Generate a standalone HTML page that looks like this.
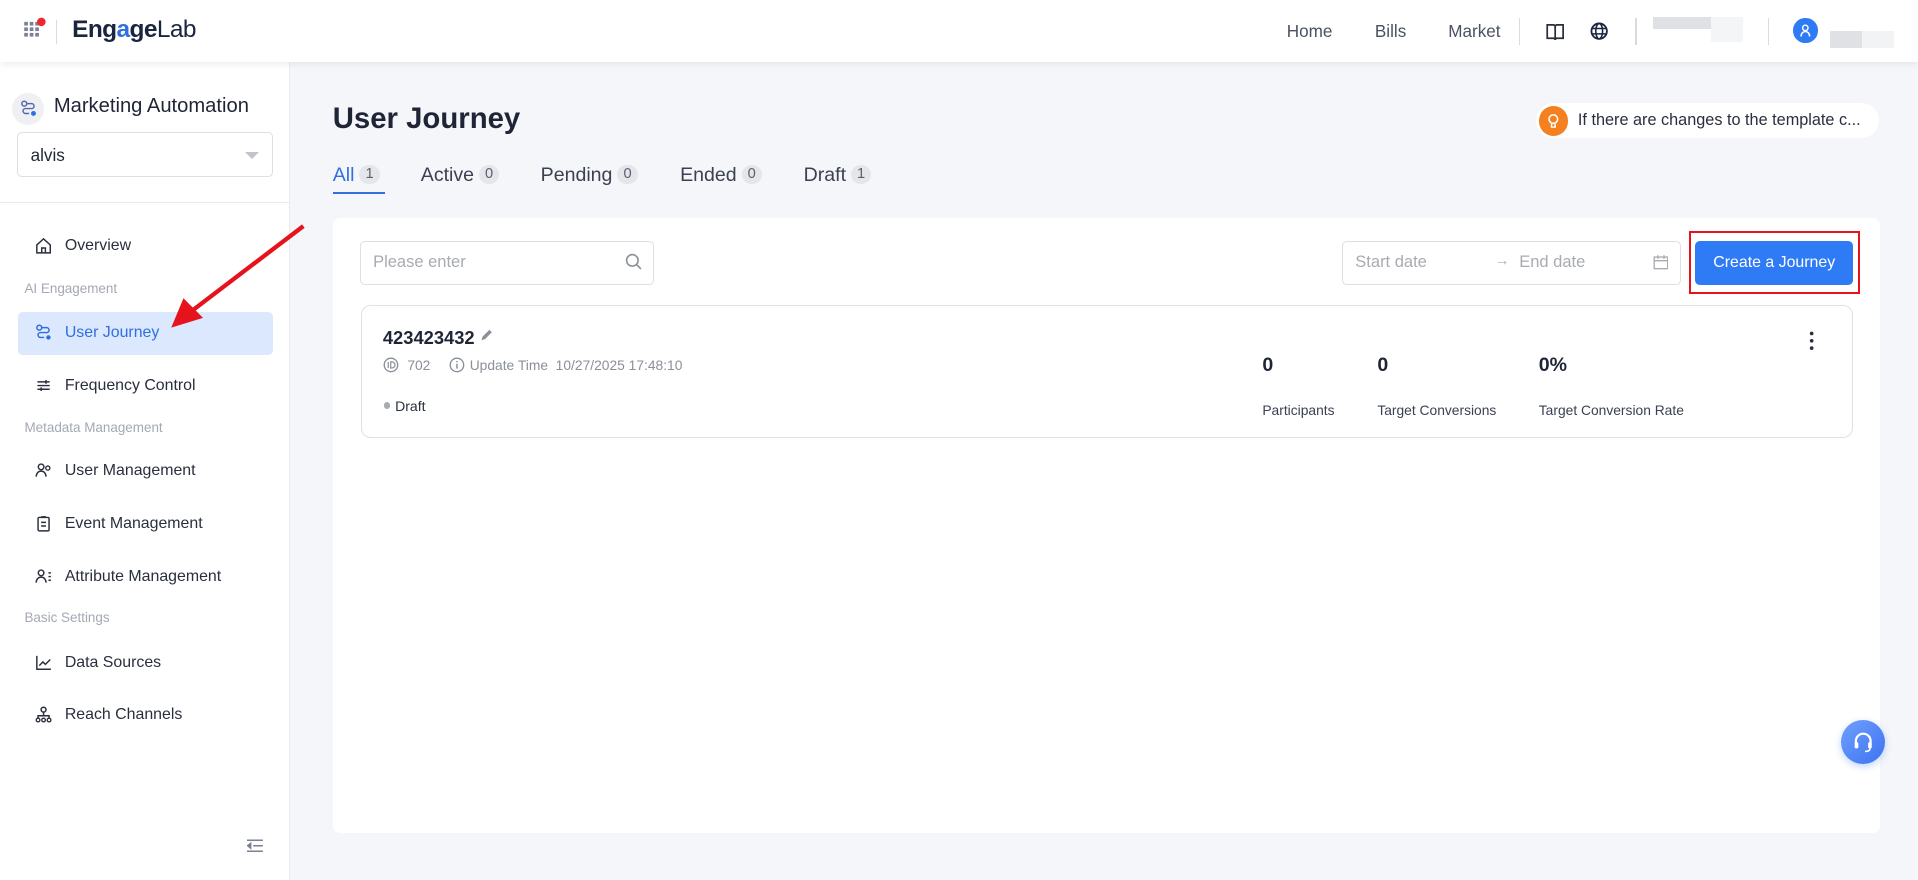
<!DOCTYPE html>
<html><head><meta charset="utf-8"><style>
*{box-sizing:border-box;margin:0;padding:0}
html,body{width:1918px;height:880px;overflow:hidden;background:#f5f6fa}
#z{zoom:1.2232;width:1568px;height:720px;position:relative;font-family:"Liberation Sans",Arial,sans-serif;color:#1f2536}
.a{position:absolute}
.hdr{left:0;top:0;width:1568px;height:51px;background:#fff;box-shadow:0 2px 6px rgba(0,0,0,.08);z-index:3}
.nav{font-size:14px;color:#4a5163;top:18px}
.vd{width:1px;height:22px;background:#d8dbe2;top:15px}
.side{left:0;top:51px;width:237px;height:669px;background:#fff;border-right:1px solid #e8eaef}
.mi{left:53px;font-size:13px;color:#2a2f3d}
.ic{left:29px;width:14px;height:14px}
.grp{left:20px;font-size:11px;color:#a3a8b4}
.tab{top:134px;font-size:16px;color:#3b4152}
.bd{display:inline-block;background:#e4e6ea;color:#5a6070;font-size:12px;border-radius:8px;padding:1px 5px;margin-left:4px;vertical-align:2px}
.lbl{font-size:11.3px;color:#3b4152;top:329px}
.num{font-size:16px;font-weight:bold;top:289px}
</style></head><body><div id="z">
<div class="a hdr">
 <svg class="a" style="left:19px;top:14px" width="20" height="18"><g fill="#7b8190"><rect x="1" y="4" width="3" height="3"/><rect x="5.5" y="4" width="3" height="3"/><rect x="10" y="4" width="3" height="3"/><rect x="1" y="8.5" width="3" height="3"/><rect x="5.5" y="8.5" width="3" height="3"/><rect x="10" y="8.5" width="3" height="3"/><rect x="1" y="13" width="3" height="3"/><rect x="5.5" y="13" width="3" height="3"/><rect x="10" y="13" width="3" height="3"/></g><circle cx="15" cy="4" r="3.5" fill="#f0262e"/></svg>
 <div class="a" style="left:46px;top:16px;width:1px;height:20px;background:#d8dbe2"></div>
 <div class="a" style="left:59px;top:13px;font-size:20px;font-weight:bold;color:#1c2540;letter-spacing:-.5px">Eng<span style="color:#2f6fe0">a</span>ge<span style="font-weight:normal">Lab</span></div>
 <div class="a nav" style="left:1052px">Home</div>
 <div class="a nav" style="left:1124px">Bills</div>
 <div class="a nav" style="left:1184px">Market</div>
 <div class="a vd" style="left:1242px"></div>
 <svg class="a" style="left:1264px;top:19px" width="15" height="14"><path d="M1 1.5h5.5l1 1 1-1H14v11H8.5l-1 1-1-1H1z M7.5 2.5v10" fill="none" stroke="#2a2f3d" stroke-width="1.4"/></svg>
 <svg class="a" style="left:1300px;top:18px" width="15" height="15"><circle cx="7.5" cy="7.5" r="6.3" fill="none" stroke="#1c2540" stroke-width="1.5"/><ellipse cx="7.5" cy="7.5" rx="2.8" ry="6.3" fill="none" stroke="#1c2540" stroke-width="1.3"/><path d="M1.2 5.3h12.6M1.2 9.7h12.6" stroke="#1c2540" stroke-width="1.3"/></svg>
 <div class="a vd" style="left:1337px"></div>
 <div class="a" style="left:1351px;top:14px;width:48px;height:10px;background:#dfe1e5"></div>
 <div class="a" style="left:1399px;top:14px;width:26px;height:20px;background:#f4f5f6"></div>
 <div class="a vd" style="left:1445px"></div>
 <div class="a" style="left:1466px;top:15px;width:20px;height:20px;border-radius:50%;background:#2f7bf5"></div>
 <svg class="a" style="left:1470px;top:19px" width="12" height="12"><circle cx="6" cy="4" r="2.2" fill="none" stroke="#fff" stroke-width="1.2"/><path d="M2.5 11c0-2.5 1.5-4 3.5-4s3.5 1.5 3.5 4" fill="none" stroke="#fff" stroke-width="1.2"/></svg>
 <div class="a" style="left:1496px;top:25px;width:26px;height:14px;background:#dfe1e5"></div>
 <div class="a" style="left:1522px;top:25px;width:26px;height:14px;background:#f2f3f5"></div>
</div>
<div class="a side">
 <div class="a" style="left:10px;top:25px;width:26px;height:26px;border-radius:50%;background:#eef0f4"></div>
 <svg class="a" style="left:16px;top:31px" width="14" height="14"><circle cx="3.5" cy="3" r="2" fill="none" stroke="#5a6aa8" stroke-width="1.2"/><path d="M5.5 3h4a2 2 0 010 4h-5a2 2 0 000 4h3" fill="none" stroke="#5a6aa8" stroke-width="1.2"/><circle cx="11" cy="11" r="2" fill="#2f6fe0"/></svg>
 <div class="a" style="left:44px;top:27px;font-size:16.5px;color:#1f2536">Marketing Automation</div>
 <div class="a" style="left:14px;top:57px;width:209px;height:37px;border:1px solid #dcdfe6;border-radius:4px"></div>
 <div class="a" style="left:25px;top:68px;font-size:14px">alvis</div>
 <div class="a" style="left:200px;top:73px;width:0;height:0;border-left:6px solid transparent;border-right:6px solid transparent;border-top:6px solid #c0c4cc"></div>
 <div class="a" style="left:0;top:114px;width:237px;height:1px;background:#e8eaef"></div>
 <svg class="a ic" style="top:143px" viewBox="0 0 14 14"><path d="M1.5 6.5L7 1.5l5.5 5V13h-11z M5.5 13V9h3v4" fill="none" stroke="#2a2f3d" stroke-width="1.2"/></svg>
 <div class="a mi" style="top:143px">Overview</div>
 <div class="a grp" style="top:179px">AI Engagement</div>
 <div class="a" style="left:15px;top:204px;width:208px;height:35px;border-radius:4px;background:#dbe8fd"></div>
 <svg class="a ic" style="top:214px" viewBox="0 0 14 14"><circle cx="3.5" cy="3" r="2" fill="none" stroke="#2f6fe0" stroke-width="1.2"/><path d="M5.5 3h4a2 2 0 010 4h-5a2 2 0 000 4h3" fill="none" stroke="#2f6fe0" stroke-width="1.2"/><circle cx="11" cy="11" r="1.8" fill="#2f6fe0"/></svg>
 <div class="a mi" style="top:214px;color:#2f6fe0">User Journey</div>
 <svg class="a ic" style="top:257px" viewBox="0 0 14 14"><path d="M2 4h10M2 7h10M2 10h10M9 2.5v3M5 8.5v3" stroke="#2a2f3d" stroke-width="1.2"/></svg>
 <div class="a mi" style="top:257px">Frequency Control</div>
 <div class="a grp" style="top:292px">Metadata Management</div>
 <svg class="a ic" style="top:327px" viewBox="0 0 14 14"><circle cx="5" cy="4" r="2.3" fill="none" stroke="#2a2f3d" stroke-width="1.2"/><path d="M1 12c0-3 2-4.5 4-4.5S9 9 9 12" fill="none" stroke="#2a2f3d" stroke-width="1.2"/><circle cx="10.5" cy="5" r="1.7" fill="none" stroke="#2a2f3d" stroke-width="1.1"/></svg>
 <div class="a mi" style="top:327px">User Management</div>
 <svg class="a ic" style="top:370px" viewBox="0 0 14 14"><rect x="2.5" y="2" width="9" height="11" rx="1" fill="none" stroke="#2a2f3d" stroke-width="1.2"/><path d="M5 1.5h4M5 6h4M5 9h4" stroke="#2a2f3d" stroke-width="1.2"/></svg>
 <div class="a mi" style="top:370px">Event Management</div>
 <svg class="a ic" style="top:413px" viewBox="0 0 14 14"><circle cx="5" cy="4" r="2.3" fill="none" stroke="#2a2f3d" stroke-width="1.2"/><path d="M1 12c0-3 2-4.5 4-4.5S9 9 9 12M11 4h2M11 7h2M11 10h2" fill="none" stroke="#2a2f3d" stroke-width="1.2"/></svg>
 <div class="a mi" style="top:413px">Attribute Management</div>
 <div class="a grp" style="top:448px">Basic Settings</div>
 <svg class="a ic" style="top:484px" viewBox="0 0 14 14"><path d="M1.5 1.5V12.5H13M3.5 9.5l3-3 2 2 4-4" fill="none" stroke="#2a2f3d" stroke-width="1.2"/></svg>
 <div class="a mi" style="top:484px">Data Sources</div>
 <svg class="a ic" style="top:526px" viewBox="0 0 14 14"><circle cx="7" cy="3" r="2" fill="none" stroke="#2a2f3d" stroke-width="1.2"/><path d="M7 5v3M2.5 10V8h9v2" fill="none" stroke="#2a2f3d" stroke-width="1.2"/><circle cx="2.5" cy="11.5" r="1.5" fill="none" stroke="#2a2f3d" stroke-width="1.1"/><circle cx="7" cy="11.5" r="1.5" fill="none" stroke="#2a2f3d" stroke-width="1.1"/><circle cx="11.5" cy="11.5" r="1.5" fill="none" stroke="#2a2f3d" stroke-width="1.1"/></svg>
 <div class="a mi" style="top:526px">Reach Channels</div>
 <svg class="a" style="left:202px;top:635px" width="13" height="11"><path d="M0 1h13M5 5.5h8M0 10h13M3 3.5L0.5 5.5 3 7.5z" stroke="#7b8190" stroke-width="1.2" fill="#7b8190"/></svg>
</div>
<div class="a" style="left:272px;top:83px;font-size:24px;font-weight:bold;color:#1f2536">User Journey</div>
<div class="a" style="left:1256px;top:84px;width:280px;height:29px;border-radius:15px;background:#fff"></div>
<div class="a" style="left:1258px;top:87px;width:24px;height:24px;border-radius:50%;background:#f5801f"></div>
<svg class="a" style="left:1264px;top:92px" width="12" height="14"><circle cx="6" cy="5" r="3.5" fill="none" stroke="#fff" stroke-width="1.3"/><path d="M4.5 9v2.5h3V9" fill="none" stroke="#fff" stroke-width="1.2"/></svg>
<div class="a" style="left:1290px;top:91px;font-size:13.3px;color:#2a2f3d">If there are changes to the template c...</div>
<div class="a tab" style="left:272px;color:#2f6fe0">All<span class="bd">1</span></div>
<div class="a" style="left:272px;top:157px;width:43px;height:2px;background:#2f6fe0"></div>
<div class="a tab" style="left:344px">Active<span class="bd">0</span></div>
<div class="a tab" style="left:442px">Pending<span class="bd">0</span></div>
<div class="a tab" style="left:556px">Ended<span class="bd">0</span></div>
<div class="a tab" style="left:657px">Draft<span class="bd">1</span></div>
<div class="a" style="left:272px;top:178px;width:1265px;height:503px;background:#fff;border-radius:6px"></div>
<div class="a" style="left:294px;top:197px;width:241px;height:36px;border:1px solid #dcdfe6;border-radius:4px"></div>
<div class="a" style="left:305px;top:207px;font-size:13.5px;color:#a8abb2">Please enter</div>
<svg class="a" style="left:511px;top:207px" width="14" height="14"><circle cx="6" cy="6" r="4.7" fill="none" stroke="#8a8f99" stroke-width="1.3"/><path d="M9.5 9.5l3.5 3.5" stroke="#8a8f99" stroke-width="1.3"/></svg>
<div class="a" style="left:1097px;top:197px;width:277px;height:36px;border:1px solid #dcdfe6;border-radius:4px"></div>
<div class="a" style="left:1108px;top:207px;font-size:13.5px;color:#a8abb2">Start date</div>
<div class="a" style="left:1222px;top:207px;font-size:12px;color:#a8abb2">→</div>
<div class="a" style="left:1242px;top:207px;font-size:13.5px;color:#a8abb2">End date</div>
<svg class="a" style="left:1351px;top:208px" width="13" height="13"><rect x="1" y="2.5" width="11" height="9.5" fill="none" stroke="#a8abb2" stroke-width="1.1"/><path d="M1 5.5h11M4 1v3M9 1v3" stroke="#a8abb2" stroke-width="1.1"/></svg>
<div class="a" style="left:1381px;top:189px;width:140px;height:51px;border:2px solid #e5141c"></div>
<div class="a" style="left:1386px;top:197px;width:129px;height:36px;border-radius:4px;background:#2f7bf5;color:#fff;font-size:13px;text-align:center;line-height:36px">Create a Journey</div>
<div class="a" style="left:295px;top:249px;width:1220px;height:109px;border:1px solid #dfe1e6;border-radius:8px"></div>
<div class="a" style="left:313px;top:267px;font-size:15px;font-weight:bold;color:#1f2536">423423432</div>
<svg class="a" style="left:392px;top:268px" width="12" height="12"><path d="M2 10l1-3 5.5-5.5 2 2L5 9z" fill="#8a8f99"/></svg>
<svg class="a" style="left:313px;top:292px" width="13" height="13"><circle cx="6.5" cy="6.5" r="5.5" fill="none" stroke="#8a8f99" stroke-width="1.1"/><path d="M4.3 4v5M6.3 4h1a2.5 2.5 0 010 5h-1z" fill="none" stroke="#8a8f99" stroke-width="1"/></svg>
<div class="a" style="left:333px;top:292px;font-size:11.3px;color:#8a8f99">702</div>
<svg class="a" style="left:367px;top:292px" width="13" height="13"><circle cx="6.5" cy="6.5" r="5.5" fill="none" stroke="#8a8f99" stroke-width="1.1"/><path d="M6.5 5.5v4M6.5 3.3v1" stroke="#8a8f99" stroke-width="1.2"/></svg>
<div class="a" style="left:384px;top:292px;font-size:11.3px;color:#8a8f99">Update Time&nbsp; 10/27/2025 17:48:10</div>
<div class="a" style="left:314px;top:329px;width:5px;height:5px;border-radius:50%;background:#a8abb2"></div>
<div class="a" style="left:323px;top:325px;font-size:11.5px;color:#2a2f3d">Draft</div>
<div class="a num" style="left:1032px">0</div>
<div class="a num" style="left:1126px">0</div>
<div class="a num" style="left:1258px">0%</div>
<div class="a lbl" style="left:1032px">Participants</div>
<div class="a lbl" style="left:1126px">Target Conversions</div>
<div class="a lbl" style="left:1258px">Target Conversion Rate</div>
<svg class="a" style="left:1478px;top:271px" width="6" height="16"><circle cx="3" cy="2" r="1.5" fill="#2a2f3d"/><circle cx="3" cy="8" r="1.5" fill="#2a2f3d"/><circle cx="3" cy="14" r="1.5" fill="#2a2f3d"/></svg>
<div class="a" style="left:1505px;top:589px;width:36px;height:36px;border-radius:50%;background:linear-gradient(135deg,#6fa0ff,#3d72f0);box-shadow:0 2px 6px rgba(47,111,224,.3)"></div>
<svg class="a" style="left:1513px;top:597px" width="20" height="20"><path d="M4 11V9a6 6 0 0112 0v2" fill="none" stroke="#fff" stroke-width="1.8"/><rect x="3" y="10" width="3" height="5" rx="1" fill="#fff"/><rect x="14" y="10" width="3" height="5" rx="1" fill="#fff"/><path d="M15.5 15q0 2.5-4 2.5" fill="none" stroke="#fff" stroke-width="1.4"/></svg>
<svg class="a" style="left:130px;top:180px;z-index:4" width="125" height="95"><path d="M118 5L22 78" stroke="#e5141c" stroke-width="3.5"/><path d="M10 88L20 64L36 80z" fill="#e5141c"/></svg>
</div></body></html>
